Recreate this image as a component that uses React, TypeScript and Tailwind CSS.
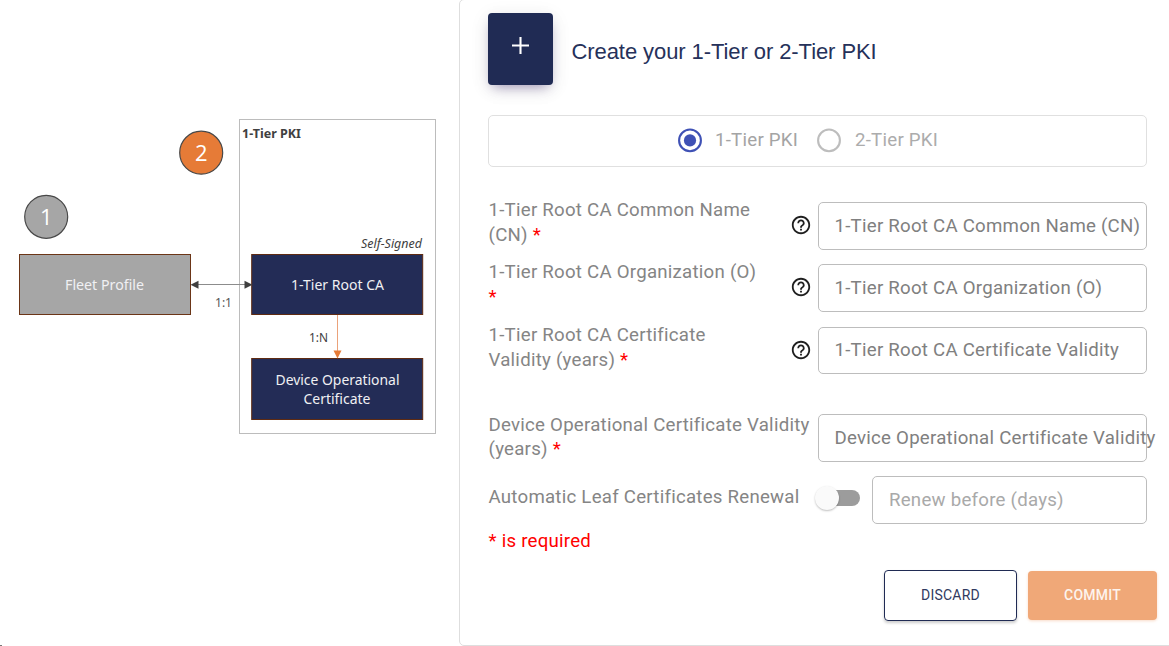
import React from "react";

function Diagram() {
  return (
    <svg width="459" height="646" viewBox="0 0 459 646" className="block" fontFamily="'Noto Sans', 'Open Sans', sans-serif">
      <path d="M0 645h2v1H0z" fill="#777" />
      <rect x="239.5" y="119.5" width="196" height="314" fill="#fff" stroke="#bcbcbc" />
      <circle cx="46.2" cy="216.8" r="21.5" fill="#a6a6a6" stroke="#484848" strokeWidth="1.2" />
      <circle cx="201.2" cy="152.7" r="21.5" fill="#e67b37" stroke="#484848" strokeWidth="1.2" />
      <g fill="#fff" fontSize="22" textAnchor="middle" fontFamily="'Open Sans', sans-serif">
        <text x="46.2" y="225">1</text>
        <text x="201.2" y="161">2</text>
      </g>
      <rect x="19.5" y="254.5" width="171" height="60" fill="#a6a6a6" stroke="#6b3517" />
      <rect x="251.7" y="254.5" width="171" height="60" fill="#232c56" stroke="#5f2b12" />
      <rect x="251.7" y="358.5" width="171" height="61" fill="#232c56" stroke="#5f2b12" />
      <path d="M197 284.5H246" stroke="#8c8c8c" />
      <path d="M190.5 284.7l8-4v8zM252.5 284.7l-8-4v8z" fill="#404040" />
      <path d="M337.5 315v37" stroke="#eba27a" />
      <path d="M337.5 358.5l-4-8h8z" fill="#e67b37" />
      <text x="242" y="138" fontSize="13" fontWeight="700" fill="#404040" textLength="59" lengthAdjust="spacingAndGlyphs">1-Tier PKI</text>
      <text x="361" y="248" fontSize="12" fontStyle="italic" fill="#404040" textLength="61" lengthAdjust="spacingAndGlyphs">Self-Signed</text>
      <text x="215" y="307" fontSize="12" fill="#555" textLength="17" lengthAdjust="spacingAndGlyphs">1:1</text>
      <text x="309" y="342" fontSize="12" fill="#404040" textLength="19" lengthAdjust="spacingAndGlyphs">1:N</text>
      <g fill="#f0f0f3" fontSize="14">
        <text x="65" y="290" textLength="79" lengthAdjust="spacingAndGlyphs">Fleet Profile</text>
        <text x="291" y="290" textLength="93" lengthAdjust="spacingAndGlyphs">1-Tier Root CA</text>
        <text x="275.5" y="385" textLength="124" lengthAdjust="spacingAndGlyphs">Device Operational</text>
        <text x="303.5" y="404" textLength="67" lengthAdjust="spacingAndGlyphs">Certificate</text>
      </g>
    </svg>
  );
}

function HelpIcon() {
  return (
    <svg width="22" height="22" viewBox="0 0 24 24" fill="#1f1f1f" className="block shrink-0">
      <path d="M11 18h2v-2h-2v2zm1-16C6.48 2 2 6.48 2 12s4.480 10 10 10 10-4.480 10-10S17.520 2 12 2zm0 18c-4.410 0-8-3.590-8-8s3.590-8 8-8 8 3.590 8 8-3.590 8-8 8zm0-14c-2.210 0-4 1.790-4 4h2c0-1.100.9-2 2-2s2 .9 2 2c0 2-3 1.750-3 5h2c0-2.250 3-2.500 3-5 0-2.210-1.790-4-4-4z" />
    </svg>
  );
}

function Star() {
  return <span className="text-[#ff0000]">*</span>;
}

function Field({ children }: { children: React.ReactNode }) {
  return (
    <div className="flex w-[329px] shrink-0 items-center whitespace-nowrap rounded-[5px] border border-[#bdbdbd] pl-[15.5px] text-[#808080]">
      {children}
    </div>
  );
}

function Row({ label, placeholder, className, help }: { label: React.ReactNode; placeholder: string; className: string; help?: boolean }) {
  return (
    <div className={"flex " + className}>
      <div className={help ? "-mt-1 flex h-[50px] w-[330px] shrink-0" : "-mt-px flex h-[50px] w-[330px] shrink-0"}>
        <p className={help ? "w-[301.5px] pl-[0.5px]" : "w-[330px] whitespace-nowrap pl-[0.5px] leading-[24.4px]"}>{label}</p>
        {help && <div className="pt-[16px]"><HelpIcon /></div>}
      </div>
      <Field>{placeholder}</Field>
    </div>
  );
}

export default function App() {
  return (
    <div className="flex h-[646px] w-[1169px] overflow-hidden bg-white">
      <div className="w-[459px] shrink-0"><Diagram /></div>
      <main className="-mt-px h-[647px] w-[730px] shrink-0 rounded-[5px] border border-[#dedede] bg-white pl-7 pt-[13px] font-['Roboto',sans-serif] text-[18.67px] leading-[24.8px] tracking-[0.24px] text-[#858585]">
        <header className="flex h-[72px]">
          <div className="flex w-[65px] justify-center rounded-[4px] bg-[#202b54] pt-[24px] shadow-[0_6px_12px_-5px_rgba(60,40,110,0.5),0_4px_20px_rgba(0,0,0,0.08)]">
            <svg width="17" height="17" viewBox="0 0 17 17" className="block"><path d="M8.500 0v17M0 8.500h17" stroke="#fff" strokeWidth="2.100" /></svg>
          </div>
          <h1 className="ml-[18.5px] mt-[27px] font-['Liberation_Sans',sans-serif] text-[22px] font-normal tracking-[-0.08px] text-[#26315a]">Create your 1-Tier or 2-Tier PKI</h1>
        </header>

        <div className="mt-[30px] flex h-[52px] w-[659px] items-center rounded-[5px] border border-[#e0e0e0] pl-[188.3px] pb-[1px] text-[#acacac]">
          <svg width="26" height="26" viewBox="0 0 26 26" className="block"><circle cx="13" cy="12.400" r="10.900" fill="none" stroke="#3f51b5" strokeWidth="2.100" /><circle cx="13" cy="12.400" r="6.100" fill="#3f51b5" /></svg>
          <span className="ml-[11.7px] w-[101px] text-[#a4a4a4]">1-Tier PKI</span>
          <svg width="26" height="26" viewBox="0 0 26 26" className="block"><circle cx="13" cy="12.400" r="10.900" fill="none" stroke="#bdbdbd" strokeWidth="2.100" /></svg>
          <span className="ml-[13px]">2-Tier PKI</span>
        </div>

        <Row className="mt-[35px] h-[48px]" help label={<>1-Tier Root CA Common Name<br />(CN) <Star /></>} placeholder="1-Tier Root CA Common Name (CN)" />
        <Row className="mt-[14px] h-[48px]" help label={<>1-Tier Root CA Organization (O)<br /><Star /></>} placeholder="1-Tier Root CA Organization (O)" />
        <Row className="mt-[15px] h-[47px]" help label={<>1-Tier Root CA Certificate<br />Validity (years) <Star /></>} placeholder="1-Tier Root CA Certificate Validity" />
        <Row className="mt-[40px] h-[48px]" label={<>Device Operational Certificate Validity<br />(years) <Star /></>} placeholder="Device Operational Certificate Validity" />

        <div className="mt-[14px] flex h-[48px]">
          <span className="w-[327px] shrink-0 pl-[0.5px] pt-[9px]">Automatic Leaf Certificates Renewal</span>
          <div className="mt-[10px] flex h-6 w-[45px] items-center">
            <div className="z-10 h-6 w-6 shrink-0 rounded-full bg-[#fafafa] shadow-[0_1px_2px_rgba(0,0,0,0.25)]" />
            <div className="-ml-3 h-4 w-[33px] shrink-0 rounded-full bg-[#9c9c9c]" />
          </div>
          <div className="ml-[12px] flex w-[275px] items-center rounded-[5px] border border-[#bdbdbd] pl-4 text-[#a9a9a9]">Renew before (days)</div>
        </div>

        <p className="mt-[5px] pl-[0.5px] text-[#ff0000]">* is required</p>

        <div className="mt-[16px] flex text-[14px] leading-[20px] tracking-[0.2px]">
          <button className="ml-[396px] h-[51px] w-[133px] rounded-[4px] border border-[#202b54] text-[#303a60] shadow-[0_2px_3px_rgba(0,0,0,0.2)]">DISCARD</button>
          <button className="ml-[11px] mt-px h-[49px] w-[129px] rounded-[4px] bg-[#f0a878] font-medium text-[#fdf4ee] shadow-[0_1px_3px_rgba(240,168,120,0.4)]">COMMIT</button>
        </div>
      </main>
    </div>
  );
}
